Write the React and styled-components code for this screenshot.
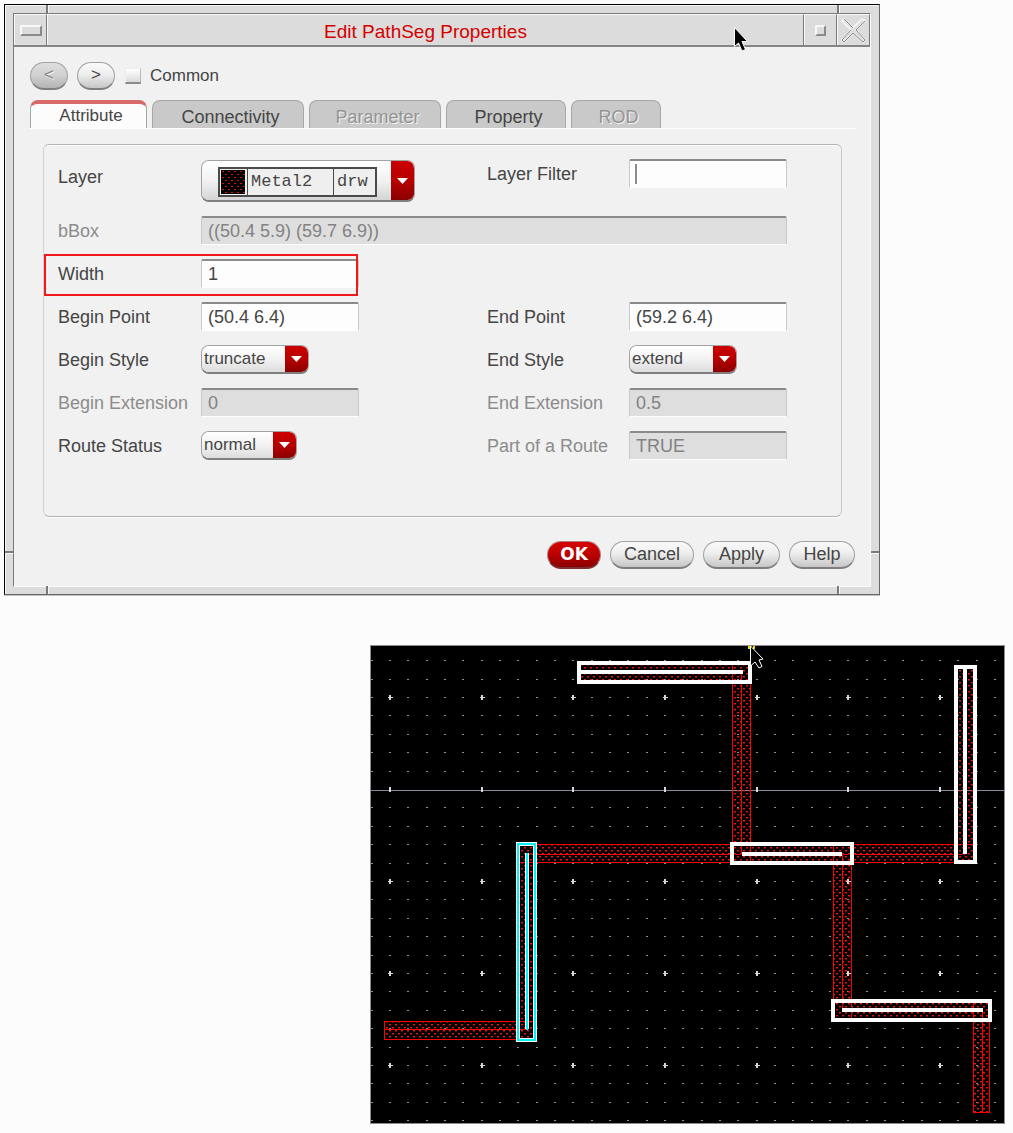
import React, { useState } from "react";
import styled, { createGlobalStyle, css } from "styled-components";

const GlobalStyle = createGlobalStyle`
  *, *::before, *::after { box-sizing: border-box; }
  body {
    margin: 0;
    background: #fcfcfc;
    color: #454545;
    font: 18px/22px "Liberation Sans", Arial, Helvetica, sans-serif;
  }
  button, input, select { font: inherit; color: inherit; margin: 0; }
`;

const Page = styled.main`
  display: flex;
  flex-direction: column;
  gap: 50px;
  padding: 4px 8px 10px 4px;
`;

/* ---------- window frame ---------- */

const Window = styled.section`
  position: relative;
  width: 100%;
  max-width: 876px;
  padding: 8px 8px 7px 8px;
  border: 1px solid #000;
  border-right-color: #666;
  border-bottom-color: #666;
  background: #dcdcdc;
  box-shadow: inset 1px 1px #f6f6f6, 0 1px #c4c4c4;
`;

const Tick = styled.span`
  position: absolute;
  background: #7a7a7a;
  ${({ $side }) => ($side === "top" || $side === "bottom"
    ? css`width: 2px; height: 8px; box-shadow: 1px 0 #f8f8f8;`
    : css`width: 8px; height: 2px; box-shadow: 0 1px #f8f8f8;`)}
  ${({ $side }) => css`${$side}: 0;`}
  ${({ $start }) => $start && css`left: 41px;`}
  ${({ $end }) => $end && css`right: 40px;`}
  ${({ $low }) => $low && css`bottom: 41px;`}
`;

const Inner = styled.div`
  border: 1px solid #7a7a7a;
  border-right-color: #fafafa;
  border-bottom-color: #fafafa;
  background: #f1f1f1;
`;

const TitleBar = styled.header`
  display: flex;
  height: 33px;
  background: #dcdcdc;
  border-bottom: 2px solid #858585;
`;

const WinButton = styled.button`
  display: grid;
  place-items: center;
  flex: none;
  width: 33px;
  padding: 0;
  border: 1px solid #f8f8f8;
  border-right: 1px solid #7a7a7a;
  border-bottom: 0;
  background: #dcdcdc;
`;

const Title = styled.h1`
  flex: 1;
  margin: 0;
  padding-top: 1px;
  border: 1px solid #f8f8f8;
  border-right: 1px solid #7a7a7a;
  border-bottom: 0;
  color: #d40000;
  font-size: 19px;
  font-weight: 400;
  line-height: 32px;
  text-align: center;
`;

const Bevel = styled.span`
  width: ${({ $wide }) => ($wide ? "22px" : "11px")};
  height: 11px;
  border: 2px solid #f8f8f8;
  border-right-color: #8a8a8a;
  border-bottom-color: #8a8a8a;
`;

const PointerArrow = styled.svg`
  position: absolute;
  top: 21px;
  right: 130px;
`;

/* ---------- dialog content ---------- */

const Content = styled.form`
  padding: 15px 15px 17px 16px;
`;

const Toolbar = styled.div`
  display: flex;
  align-items: center;
  gap: 9px;
  height: 28px;
`;

const PillButton = styled.button`
  display: flex;
  align-items: center;
  justify-content: center;
  width: ${({ $w }) => $w}px;
  height: 28px;
  padding: 0 0 1px;
  border: 1px solid #a2a2a2;
  border-bottom: 2px solid #7e7e7e;
  border-radius: 14px;
  background: linear-gradient(#fafafa, #eeeeee 45%, #c6c6c6);
  ${({ $primary }) => $primary && css`
    border-color: #b08080;
    border-bottom-color: #7c3030;
    background: linear-gradient(#d60000, #bb0000 50%, #8a0000);
    color: #fff;
    font-weight: 700;
    font-family: "DejaVu Sans", "Liberation Sans", sans-serif;
    font-size: 17px;
  `}
  &:disabled {
    color: #858585;
    background: linear-gradient(#dedede, #cfcfcf 50%, #b4b4b4);
    text-shadow: 1px 1px #f4f4f4;
  }
`;

const Chevron = styled.span`
  font-size: 17px;
  line-height: 20px;
`;

const CheckLabel = styled.label`
  display: flex;
  align-items: center;
  gap: 9px;
  margin-left: 1px;
  font-size: 17px;
`;

const CheckBox = styled.input`
  appearance: none;
  width: 16px;
  height: 16px;
  border: 1px solid #ececec;
  border-right-color: #b8b8b8;
  border-bottom: 2px solid #8a8a8a;
  background: linear-gradient(#ffffff, #dadada);
  &:checked { background: #b80000; }
`;

const TabList = styled.div`
  display: flex;
  gap: 5px;
  height: 29px;
  margin-top: 10px;
  border-bottom: 1px solid #fff;
`;

const Tab = styled.button`
  width: ${({ $w }) => $w}px;
  height: 28px;
  padding: 4px 0 0 5px;
  border: 1px solid #a3aaa3;
  border-bottom: 0;
  border-radius: 8px 8px 0 0;
  background: #c9c9c9;
  line-height: 22px;
  &[aria-selected="true"] {
    padding-top: 0;
    border-top: 4px solid #d96a6a;
    background: #fcfcfc;
    font-size: 17px;
  }
  &:disabled {
    color: #949494;
    text-shadow: 1px 1px #f4f4f4;
  }
`;

const Group = styled.div`
  display: grid;
  grid-template-columns: 143px minmax(0, 286fr) 142px minmax(0, 158fr);
  grid-template-rows: 51px repeat(6, 43px);
  align-items: center;
  margin: 15px 13px 0 13px;
  padding: 13px 54px 49px 14px;
  border: 1px solid #b4b4b4;
  border-left: 1px solid #d2d2d2;
  border-right-color: #c6c6c6;
  border-radius: 6px;
  box-shadow: inset 0 1px #fff, 0 1px #fff;
`;

const Label = styled.label`
  grid-column: ${({ $col }) => $col};
  grid-row: ${({ $row }) => $row};
  color: ${({ $dim }) => ($dim ? "#8c8c8c" : "inherit")};
  ${({ $row, $col }) => $row === 1 && css`
    align-self: start;
    line-height: ${$col === 1 ? "38px" : "32px"};
  `}
`;

const Field = styled.input`
  grid-column: ${({ $col }) => $col};
  grid-row: ${({ $row }) => $row};
  width: 100%;
  max-width: ${({ $wide }) => ($wide ? "none" : "158px")};
  height: 29px;
  padding: 0 6px;
  border: 1px solid #c8c8c8;
  border-top: 2px solid #8a8a8a;
  border-bottom-color: #fff;
  border-radius: 2px;
  background: #fdfdfd;
  ${({ $row }) => $row === 1 && css`align-self: start; margin-top: 1px;`}
  ${({ $caret }) => $caret && css`
    background: linear-gradient(#8a8a8a, #8a8a8a) 5px 3px / 2px 20px no-repeat #fdfdfd;
    &:focus { background-image: none; }
  `}
  &:disabled { background: #dedede; color: #828282; }
`;

const Highlight = styled.div`
  grid-column: 1 / 3;
  grid-row: 3;
  width: 314px;
  height: 42px;
  margin: 2px 0 0 -14px;
  border: 2px solid #f01818;
  pointer-events: none;
  z-index: 1;
`;

const Combo = styled.div`
  position: relative;
  grid-column: ${({ $col }) => $col};
  grid-row: ${({ $row }) => $row};
  width: ${({ $w }) => $w}px;
  height: ${({ $tall }) => ($tall ? "42px" : "29px")};
  overflow: hidden;
  border: 1px solid #a2a2a2;
  border-bottom: 2px solid #7e7e7e;
  border-radius: 8px;
  ${({ $tall }) => $tall && css`align-self: start; margin-top: 2px;`}
`;

const ComboSelect = styled.select`
  appearance: none;
  display: block;
  width: 100%;
  height: 100%;
  padding: 0 25px 0 2px;
  border: 0;
  background: linear-gradient(#ffffff, #f2f2f2 50%, #dcdcdc);
  font-size: 17px;
`;

const LayerButton = styled.button`
  display: flex;
  align-items: center;
  width: 100%;
  height: 100%;
  padding: 2px 0 0 16px;
  border: 0;
  background: linear-gradient(#ffffff, #f2f2f2 50%, #d4d4d4);
  font: 17px/25px "Liberation Mono", "Courier New", monospace;
`;

const LayerCells = styled.span`
  display: grid;
  grid-template-columns: 27px 86px 42px;
  grid-template-rows: 26px;
  border: 2px solid #4a4a4a;
  background: #efefef;
  text-align: left;
`;

const LayerCell = styled.span`
  padding: ${({ $first }) => ($first ? "1px" : "0 3px")};
  border-left: ${({ $first }) => ($first ? "0" : "1px solid #4a4a4a")};
  svg { display: block; }
`;

const ComboArrow = styled.span`
  position: absolute;
  inset: 0 0 0 auto;
  display: grid;
  place-items: center;
  width: 23px;
  background: linear-gradient(#cc0000, #b80000 50%, #8a0000);
  pointer-events: none;
`;

const Footer = styled.footer`
  display: flex;
  justify-content: flex-end;
  gap: 9px;
  margin-top: 24px;
`;

const CanvasFrame = styled.figure`
  width: 100%;
  max-width: 635px;
  margin: 0 0 0 auto;
  border: 1px solid #8c8c8c;
  background: #000;
  svg { display: block; width: 100%; height: auto; }
`;

/* ---------- pieces ---------- */

function Arrow() {
  return (
    <ComboArrow>
      <svg width="11" height="6" viewBox="0 0 11 6"><path d="M0 0H11L5.500 6Z" fill="#fff" /></svg>
    </ComboArrow>
  );
}

function TextRow({ id, label, value, row, side = 0, disabled, wide, caret }) {
  const col = side ? 3 : 1;
  return (
    <>
      <Label htmlFor={id} $col={col} $row={row} $dim={disabled}>{label}</Label>
      <Field id={id} $col={wide ? "2 / 5" : col + 1} $row={row} $wide={wide} $caret={caret}
        defaultValue={value} disabled={disabled} />
    </>
  );
}

function SelectRow({ id, label, options, row, side = 0, width }) {
  const col = side ? 3 : 1;
  return (
    <>
      <Label htmlFor={id} $col={col} $row={row}>{label}</Label>
      <Combo $col={col + 1} $row={row} $w={width}>
        <ComboSelect id={id}>
          {options.map((o) => <option key={o}>{o}</option>)}
        </ComboSelect>
        <Arrow />
      </Combo>
    </>
  );
}

function Swatch() {
  const dots = [];
  for (let r = 0; r < 8; r++)
    for (let c = 0; c < 4; c++) dots.push([c * 6 + (r % 2 ? 4 : 1), r * 3 + 1]);
  return (
    <svg width="24" height="24" viewBox="0 0 24 24" shapeRendering="crispEdges">
      <rect width="24" height="24" fill="#000" />
      {dots.map(([x, y]) => <rect key={`${x}-${y}`} x={x} y={y} width="2" height="1" fill="#d81010" />)}
    </svg>
  );
}

/* ---------- layout canvas ---------- */

// Metal2 shapes: outline box plus the centre line of the path.
const wires = [
  { x: 146, y: 199, w: 458, h: 18, line: "M156 209.500H595" },
  { x: 362, y: 17, w: 19, h: 201, line: "M371.500 26V209" },
  { x: 463, y: 199, w: 19, h: 175, line: "M472.500 209V365" },
  { x: 603, y: 356, w: 17, h: 111, line: "M612.500 365V467" },
  { x: 14, y: 376, w: 153, h: 18, line: "M14 384.500H157" },
  { x: 208, y: 17, w: 173, h: 19, line: "" },
  { x: 586, y: 22, w: 18, h: 195, line: "" },
  { x: 463, y: 356, w: 157, h: 18, line: "" },
  { x: 147, y: 199, w: 18, h: 195, line: "" },
];

const selected = [
  { x: 209, y: 18, w: 171, h: 19, line: "M211 27H373" },
  { x: 586, y: 22, w: 19, h: 195, line: "M595 24V209" },
  { x: 362, y: 199, w: 120, h: 19, line: "M372 209H472" },
  { x: 463, y: 356, w: 157, h: 19, line: "M472 365H613" },
];

function LayoutCanvas() {
  let dots = "";
  let crosses = "";
  for (let i = -1; i < 34; i++) {
    for (let j = -2; j < 24; j++) {
      const x = Math.round(18 + i * 18.333);
      const y = Math.round(51 + j * 18.4);
      if (j === 5) {
        if (i % 5 === 0) crosses += `M${x} ${y - 2}h2v5h-2z`;
      } else if (i % 5 === 0 && j % 5 === 0) {
        crosses += `M${x - 1} ${y}h5v1h-5zM${x} ${y - 2}h2v5h-2z`;
      } else {
        dots += `M${x} ${y}h2v1h-2z`;
      }
    }
  }
  return (
    <svg viewBox="0 0 633 477" role="img" aria-label="Layout view">
      <defs>
        <pattern id="metal2" width="6" height="6" patternUnits="userSpaceOnUse">
          <path d="M1 1h2v1h-2zM4 4h2v1h-2z" fill="#f01010" />
          <path d="M1 2h2v1h-2zM4 5h2v1h-2z" fill="#700808" />
        </pattern>
      </defs>
      <g shapeRendering="crispEdges">
        <path d={dots} fill="#8e8e96" />
        <path d="M0 144.500H633" stroke="#8a8a98" strokeWidth="1" />
        <g transform="translate(-1 -1)">
          {wires.map((w, i) => (
            <g key={i}>
              <rect x={w.x} y={w.y} width={w.w} height={w.h} fill="url(#metal2)" />
              {w.line && <rect x={w.x + 0.5} y={w.y + 0.5} width={w.w - 1} height={w.h} fill="none" stroke="#ff0000" />}
              {w.line && <path d={w.line} stroke="#ff0000" />}
            </g>
          ))}
        </g>
        <path d={crosses} fill="#d8d8dc" />
        <g transform="translate(-1 -1)">
          {selected.map((s, i) => (
            <g key={i} fill="none" stroke="#fff" strokeWidth="4">
              <rect x={s.x} y={s.y} width={s.w} height={s.h} />
              <path d={s.line} />
            </g>
          ))}
        </g>
        <g fill="none">
          <rect x="147" y="198" width="17" height="196" stroke="#fff" strokeWidth="4" />
          <rect x="147" y="198" width="17" height="196" stroke="#00f0f8" strokeWidth="2" />
          <path d="M156 207V383" stroke="#fff" strokeWidth="4" />
          <path d="M156 207V384" stroke="#00f0f8" strokeWidth="2" />
        </g>
        <path d="M377 0h2v3h-2zM382 0h2v3h-2z" fill="#f0e000" />
      </g>
      <path d="M379.500 0V20L384 16L388 22L391 20.500L388 14L392 13Z" fill="#000" stroke="#fff" strokeWidth="1" />
    </svg>
  );
}

/* ---------- page ---------- */

const tabs = [
  { name: "Attribute", w: 117 },
  { name: "Connectivity", w: 152 },
  { name: "Parameter", w: 132, disabled: true },
  { name: "Property", w: 120 },
  { name: "ROD", w: 90, disabled: true },
];

export default function App() {
  const [tab, setTab] = useState("Attribute");
  return (
    <Page>
      <GlobalStyle />
      <Window aria-labelledby="title">
        <Inner>
          <TitleBar>
            <WinButton aria-label="Window menu"><Bevel $wide /></WinButton>
            <Title id="title">Edit PathSeg Properties</Title>
            <WinButton aria-label="Maximize"><Bevel /></WinButton>
            <WinButton aria-label="Close">
              <svg width="25" height="25" viewBox="0 0 25 25" fill="none">
                <path d="M3 1L12 10L21 1L24 3L15 12L24 22L22 24L12 15L3 24L1 22L10 12L1 3Z" stroke="#fafafa" strokeWidth="1.500" />
                <path d="M24 3L15 12L24 22L22 24L12 15L3 24L1 22L10 12M3 1L12 10" stroke="#868686" />
              </svg>
            </WinButton>
          </TitleBar>

          <Content onSubmit={(e) => e.preventDefault()}>
            <Toolbar>
              <PillButton type="button" $w={38} disabled aria-label="Previous"><Chevron>&lt;</Chevron></PillButton>
              <PillButton type="button" $w={38} aria-label="Next"><Chevron>&gt;</Chevron></PillButton>
              <CheckLabel><CheckBox type="checkbox" />Common</CheckLabel>
            </Toolbar>

            <TabList role="tablist">
              {tabs.map((t) => (
                <Tab key={t.name} type="button" role="tab" $w={t.w} disabled={t.disabled}
                  aria-selected={tab === t.name} onClick={() => setTab(t.name)}>
                  {t.name}
                </Tab>
              ))}
            </TabList>

            <Group>
              <Label htmlFor="layer" $col={1} $row={1}>Layer</Label>
              <Combo $col={2} $row={1} $w={214} $tall>
                <LayerButton id="layer" type="button" aria-haspopup="listbox">
                  <LayerCells>
                    <LayerCell $first><Swatch /></LayerCell>
                    <LayerCell>Metal2</LayerCell>
                    <LayerCell>drw</LayerCell>
                  </LayerCells>
                </LayerButton>
                <Arrow />
              </Combo>
              <TextRow id="filter" label="Layer Filter" value="" row={1} side={1} caret />

              <TextRow id="bbox" label="bBox" value="((50.4 5.9) (59.7 6.9))" row={2} disabled wide />
              <TextRow id="width" label="Width" value="1" row={3} />
              <Highlight />

              <TextRow id="begin" label="Begin Point" value="(50.4 6.4)" row={4} />
              <TextRow id="end" label="End Point" value="(59.2 6.4)" row={4} side={1} />

              <SelectRow id="bstyle" label="Begin Style" options={["truncate", "extend"]} row={5} width={108} />
              <SelectRow id="estyle" label="End Style" options={["extend", "truncate"]} row={5} side={1} width={108} />

              <TextRow id="bext" label="Begin Extension" value="0" row={6} disabled />
              <TextRow id="eext" label="End Extension" value="0.5" row={6} side={1} disabled />

              <SelectRow id="route" label="Route Status" options={["normal", "fixed"]} row={7} width={96} />
              <TextRow id="part" label="Part of a Route" value="TRUE" row={7} side={1} disabled />
            </Group>

            <Footer>
              <PillButton $w={54} $primary>OK</PillButton>
              <PillButton type="button" $w={84}>Cancel</PillButton>
              <PillButton type="button" $w={77}>Apply</PillButton>
              <PillButton type="button" $w={66}>Help</PillButton>
            </Footer>
          </Content>
        </Inner>

        <Tick $side="top" $start />
        <Tick $side="top" $end />
        <Tick $side="bottom" $start />
        <Tick $side="bottom" $end />
        <Tick $side="left" $low />
        <Tick $side="right" $low />
        <PointerArrow width="16" height="27" viewBox="0 0 16 27">
          <path d="M1.500 1.500V20.500L5.500 17L9 25L12.500 23.500L9 15.500H14.500Z" fill="#000" stroke="#fff" />
        </PointerArrow>
      </Window>

      <CanvasFrame><LayoutCanvas /></CanvasFrame>
    </Page>
  );
}
